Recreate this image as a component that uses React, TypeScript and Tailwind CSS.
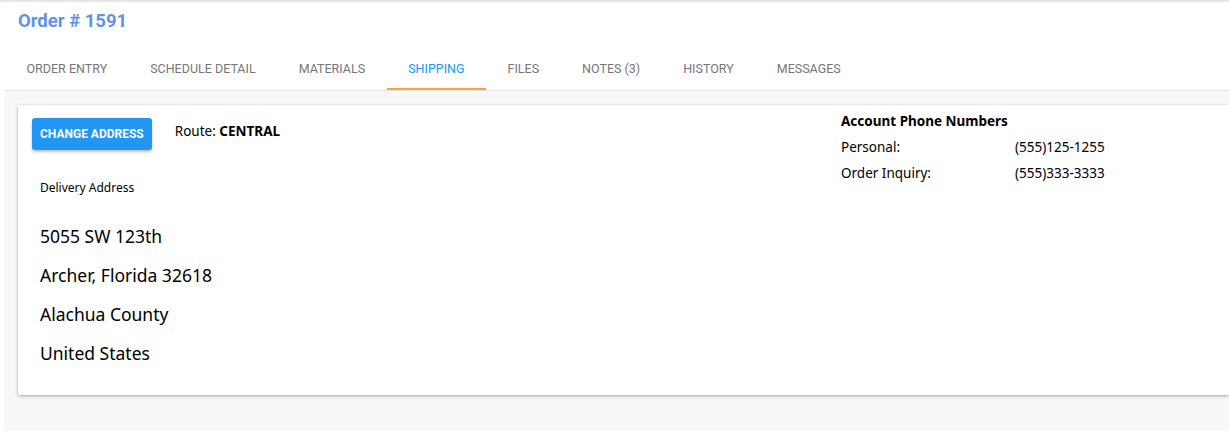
import React from 'react';

const tabs = ['Order Entry', 'Schedule Detail', 'Materials', 'Shipping', 'Files', 'Notes (3)', 'History', 'Messages'];

const addressLines = ['5055 SW 123th', 'Archer, Florida 32618', 'Alachua County', 'United States'];

const phones = [
  { label: 'Personal:', value: '(555)125-1255' },
  { label: 'Order Inquiry:', value: '(555)333-3333' },
];

export default function App() {
  return (
    <div className="h-[431px] w-[1229px] overflow-hidden bg-white shadow-[inset_0_3px_3px_-2px_rgba(0,0,0,0.18)]">
      <h1 className="px-[18px] pt-[9px] text-[18.5px] font-bold leading-6 text-[#5f93e8] [font-family:Roboto,sans-serif]">
        Order # 1591
      </h1>

      <div className="mt-[12px] ml-[5px] flex border-b border-[#e3e3e3] [font-family:Roboto,sans-serif]">
        {tabs.map((t) => {
          const active = t === 'Shipping';
          return (
            <div
              key={t}
              className={
                active
                  ? 'h-[45px] border-b-2 border-[#f6a63f] px-[21.5px] pt-[15px] text-[12.5px] uppercase text-[#2196f3]'
                  : 'h-[45px] px-[21.5px] pt-[15px] text-[12.5px] uppercase text-[#767676]'
              }
            >
              {t}
            </div>
          );
        })}
      </div>

      <div className="ml-[4px] h-full bg-[#f8f8f8] pt-[14px] pl-[14px]">
        <div className="flex h-[290px] bg-white shadow-[0_1px_3px_rgba(0,0,0,0.35)] [font-family:'Noto_Sans',sans-serif] text-black">
          <div className="w-[823px] pl-[14px] pt-[13px]">
            <div className="flex items-start">
              <button className="h-[32px] rounded-[3px] bg-[#2196f3] px-[8px] text-[12px] font-bold uppercase text-white shadow-[0_2px_3px_rgba(0,0,0,0.25)] [font-family:Roboto,sans-serif]">
                Change Address
              </button>
              <div className="ml-[23px] pt-[3px] text-[13.5px]">
                Route: <span className="font-bold">CENTRAL</span>
              </div>
            </div>
            <div className="mt-[29px] pl-[8px] text-[12px]">Delivery Address</div>
            <div className="mt-[27px] flex flex-col gap-[15px] pl-[8px] text-[17.5px] leading-6">
              {addressLines.map((l) => (
                <div key={l}>{l}</div>
              ))}
            </div>
          </div>

          <div className="pt-[6px] text-[13.5px]">
            <div className="font-bold leading-5">Account Phone Numbers</div>
            <div className="mt-[6px] flex flex-col gap-[6px]">
              {phones.map((p) => (
                <div key={p.label} className="flex leading-5">
                  <span className="w-[174px]">{p.label}</span>
                  <span>{p.value}</span>
                </div>
              ))}
            </div>
          </div>
        </div>
      </div>
    </div>
  );
}
